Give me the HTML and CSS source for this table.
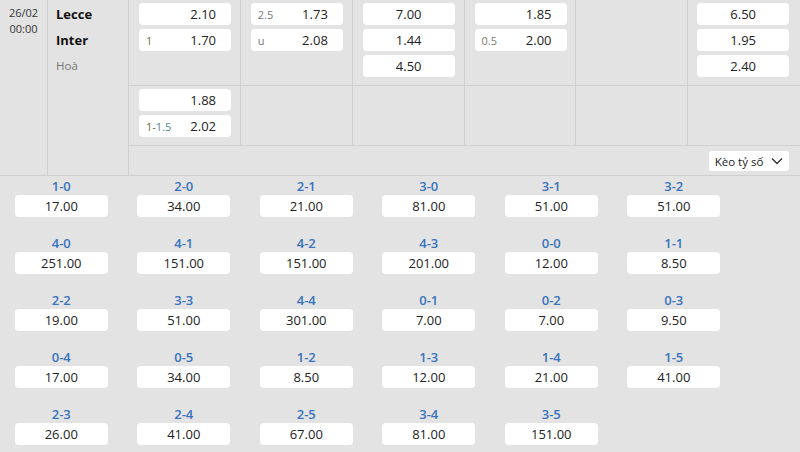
FILE: index.html
```html
<!DOCTYPE html>
<html lang="vi">
<head>
    <meta charset="UTF-8">
    <meta name="viewport" content="width=device-width, initial-scale=1.0">
    <title>Lecce - Inter</title>
    <link rel="stylesheet" href="styles.css">
</head>
<body>
    <div class="match">
        <div class="time">
            <div>26/02</div>
            <div>00:00</div>
        </div>
        <div class="teams">
            <div class="team">Lecce</div>
            <div class="team">Inter</div>
            <div class="draw">Hoà</div>
        </div>
        <div class="markets">
            <div class="market-row first">
                <div class="market">
                    <div class="odd"><span class="line"></span><span class="val">2.10</span></div>
                    <div class="odd"><span class="line olive">1</span><span class="val">1.70</span></div>
                </div>
                <div class="market">
                    <div class="odd"><span class="line">2.5</span><span class="val">1.73</span></div>
                    <div class="odd"><span class="line">u</span><span class="val">2.08</span></div>
                </div>
                <div class="market">
                    <div class="odd center">7.00</div>
                    <div class="odd center">1.44</div>
                    <div class="odd center">4.50</div>
                </div>
                <div class="market">
                    <div class="odd"><span class="line"></span><span class="val">1.85</span></div>
                    <div class="odd"><span class="line">0.5</span><span class="val">2.00</span></div>
                </div>
                <div class="market"></div>
                <div class="market">
                    <div class="odd center">6.50</div>
                    <div class="odd center">1.95</div>
                    <div class="odd center">2.40</div>
                </div>
            </div>
            <div class="market-row second">
                <div class="market">
                    <div class="odd"><span class="line"></span><span class="val">1.88</span></div>
                    <div class="odd"><span class="line olive">1-<span class="teal">1.5</span></span><span class="val">2.02</span></div>
                </div>
                <div class="market"></div>
                <div class="market"></div>
                <div class="market"></div>
                <div class="market"></div>
                <div class="market"></div>
            </div>
            <div class="market-bar">
                <button class="select-btn">Kèo tỷ số
                    <svg width="12" height="8" viewBox="0 0 12 8"><path d="M1 1.5 L6 6.5 L11 1.5" fill="none" stroke="#333" stroke-width="1.4"/></svg>
                </button>
            </div>
        </div>
    </div>

    <div class="scores" id="scores"></div>

    <script>
        const scores = [
            ['1-0', '17.00'], ['2-0', '34.00'], ['2-1', '21.00'], ['3-0', '81.00'], ['3-1', '51.00'], ['3-2', '51.00'],
            ['4-0', '251.00'], ['4-1', '151.00'], ['4-2', '151.00'], ['4-3', '201.00'], ['0-0', '12.00'], ['1-1', '8.50'],
            ['2-2', '19.00'], ['3-3', '51.00'], ['4-4', '301.00'], ['0-1', '7.00'], ['0-2', '7.00'], ['0-3', '9.50'],
            ['0-4', '17.00'], ['0-5', '34.00'], ['1-2', '8.50'], ['1-3', '12.00'], ['1-4', '21.00'], ['1-5', '41.00'],
            ['2-3', '26.00'], ['2-4', '41.00'], ['2-5', '67.00'], ['3-4', '81.00'], ['3-5', '151.00']
        ];
        const grid = document.getElementById('scores');
        scores.forEach(([label, odd]) => {
            const cell = document.createElement('div');
            cell.className = 'score';
            cell.innerHTML = `<div class="score-label">${label}</div><div class="score-odd">${odd}</div>`;
            grid.appendChild(cell);
        });
    </script>
</body>
</html>
```

FILE: styles.css
```css
body {
  margin: 0;
  background: #e3e3e3;
  font-family: "Open Sans", "Noto Sans", sans-serif;
  font-size: 12.5px;
  color: #222;
  width: 800px;
  height: 452px;
  overflow: hidden;
}

.match {
  display: flex;
  height: 175px;
  border-bottom: 1px solid #cfcfcf;
}

.time {
  width: 47px;
  border-right: 1px solid #d0d0d0;
  text-align: center;
  font-size: 11px;
  line-height: 16px;
  padding-top: 5px;
  color: #333;
}

.teams {
  width: 72px;
  padding-left: 8px;
  border-right: 1px solid #d0d0d0;
  padding-top: 1px;
}

.team {
  height: 26px;
  line-height: 26px;
  font-weight: 700;
  font-size: 13px;
  color: #111;
}

.draw {
  height: 26px;
  line-height: 26px;
  font-size: 11.5px;
  color: #777;
}

.markets {
  flex: 1;
  display: flex;
  flex-direction: column;
}

.market-row {
  display: grid;
  grid-template-columns: repeat(6, 1fr);
  border-bottom: 1px solid #d0d0d0;
}

.market-row.first {
  height: 85px;
}

.market-row.second {
  height: 59px;
}

.market {
  border-right: 1px solid #d0d0d0;
  padding: 3px 0 0 10px;
  display: flex;
  flex-direction: column;
  gap: 4px;
}

.market:last-child {
  border-right: none;
  padding-left: 9px;
}

.odd {
  width: 92px;
  height: 22px;
  background: #fff;
  border-radius: 4px;
  display: flex;
  align-items: center;
  justify-content: space-between;
  padding: 0 15px 0 7px;
  box-sizing: border-box;
  font-size: 13px;
}

.odd.center {
  justify-content: center;
  padding: 0;
}

.line {
  font-size: 11px;
  color: #777;
}

.line.olive {
  color: #6e6e45;
}

.teal {
  color: #4f8a8f;
}

.market-bar {
  flex: 1;
  display: flex;
  justify-content: flex-end;
  align-items: center;
  padding-right: 11px;
}

.select-btn {
  font-family: inherit;
  font-size: 11.5px;
  color: #222;
  background: #fff;
  border: none;
  border-radius: 3px;
  height: 20px;
  width: 80px;
  display: flex;
  align-items: center;
  justify-content: center;
  gap: 8px;
  padding: 0;
  margin-top: 1px;
}

.scores {
  display: grid;
  grid-template-columns: repeat(6, 122.5px);
  row-gap: 17px;
  padding-top: 1px;
}

.score {
  display: flex;
  flex-direction: column;
  align-items: center;
}

.score-label {
  height: 18px;
  line-height: 18px;
  color: #3873bd;
  font-weight: 600;
  font-size: 13px;
}

.score-odd {
  width: 93px;
  height: 22px;
  line-height: 22px;
  background: #fff;
  border-radius: 4px;
  text-align: center;
  font-size: 13px;
}
```
